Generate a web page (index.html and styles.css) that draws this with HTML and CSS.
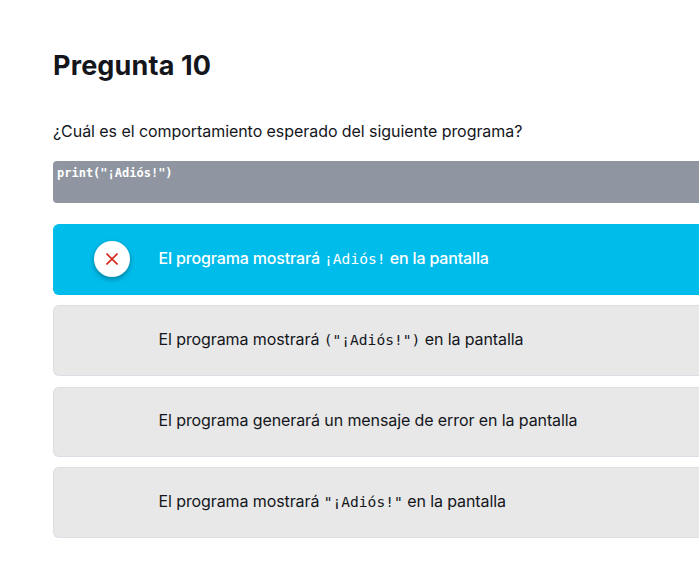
FILE: index.html
```
<!DOCTYPE html>
<html lang="es">
<head>
<meta charset="utf-8">
<title>Pregunta 10</title>
<link rel="stylesheet" href="styles.css">
</head>
<body>
<main class="quiz">
<h1 class="title">Pregunta 10</h1>
<p class="question">¿Cuál es el comportamiento esperado del siguiente programa?</p>
<pre class="snippet"><code>print("¡Adiós!")</code></pre>
<ul class="answers">
<li class="answer selected"><span class="mark"><svg width="12" height="12" viewBox="0 0 12 12"><path d="M.5.5 11.5 11.5M11.5.5.5 11.5"/></svg></span><span class="text">El programa mostrará <code>¡Adiós!</code> en la pantalla</span></li>
<li class="answer"><span class="text">El programa mostrará <code>("¡Adiós!")</code> en la pantalla</span></li>
<li class="answer compact"><span class="text">El programa generará un mensaje de error en la pantalla</span></li>
<li class="answer"><span class="text">El programa mostrará <code>"¡Adiós!"</code> en la pantalla</span></li>
</ul>
</main>
</body>
</html>
```
FILE: styles.css
```
* { box-sizing: border-box; }
body { margin: 0; background: #fff; color: #14161c; font: 16px/24px Inter, sans-serif; overflow: hidden; }
.quiz { padding: 48px 0 0 53px; }
.title { margin: 0 0 35px; font-size: 27px; line-height: 36px; font-weight: 700; letter-spacing: .15px; }
.question { margin: 0 0 18px; letter-spacing: -.06px; }
.snippet { margin: 0 0 21px; height: 42px; padding: 4px 4px; border-radius: 4px 0 0 4px; background: #8f96a1; color: #fff; font: 700 12px/16px "DejaVu Sans Mono", monospace; }
.snippet code { font: inherit; }
.answers { display: grid; gap: 10px; margin: 0; padding: 0; list-style: none; }
.answer { display: grid; grid-template-columns: 104.5px 1fr; align-items: center; height: 71px; border: 1px solid #dcdee6; border-right: 0; border-radius: 6px 0 0 6px; background: #e8e8e8; }
.compact { height: 70px; margin-top: 1px; }
.text { grid-column: 2; padding-bottom: 4px; line-height: 24px; white-space: nowrap; letter-spacing: -.1px; }
.compact .text { padding-bottom: 5px; }
.text code { font: 14.6px/20px "DejaVu Sans Mono", monospace; letter-spacing: 0; }
.selected { background: #00bceb; border-color: #00bceb; color: #fff; }
.selected .text { font-weight: 500; letter-spacing: -.15px; }
.mark { display: grid; place-items: center; width: 36px; height: 36px; margin: 0 0 2px 40px; border-radius: 50%; background: #fff; box-shadow: 0 2px 5px rgba(0,0,0,.35); }
.mark path { fill: none; stroke: #d3271c; stroke-width: 1.6; }
```
